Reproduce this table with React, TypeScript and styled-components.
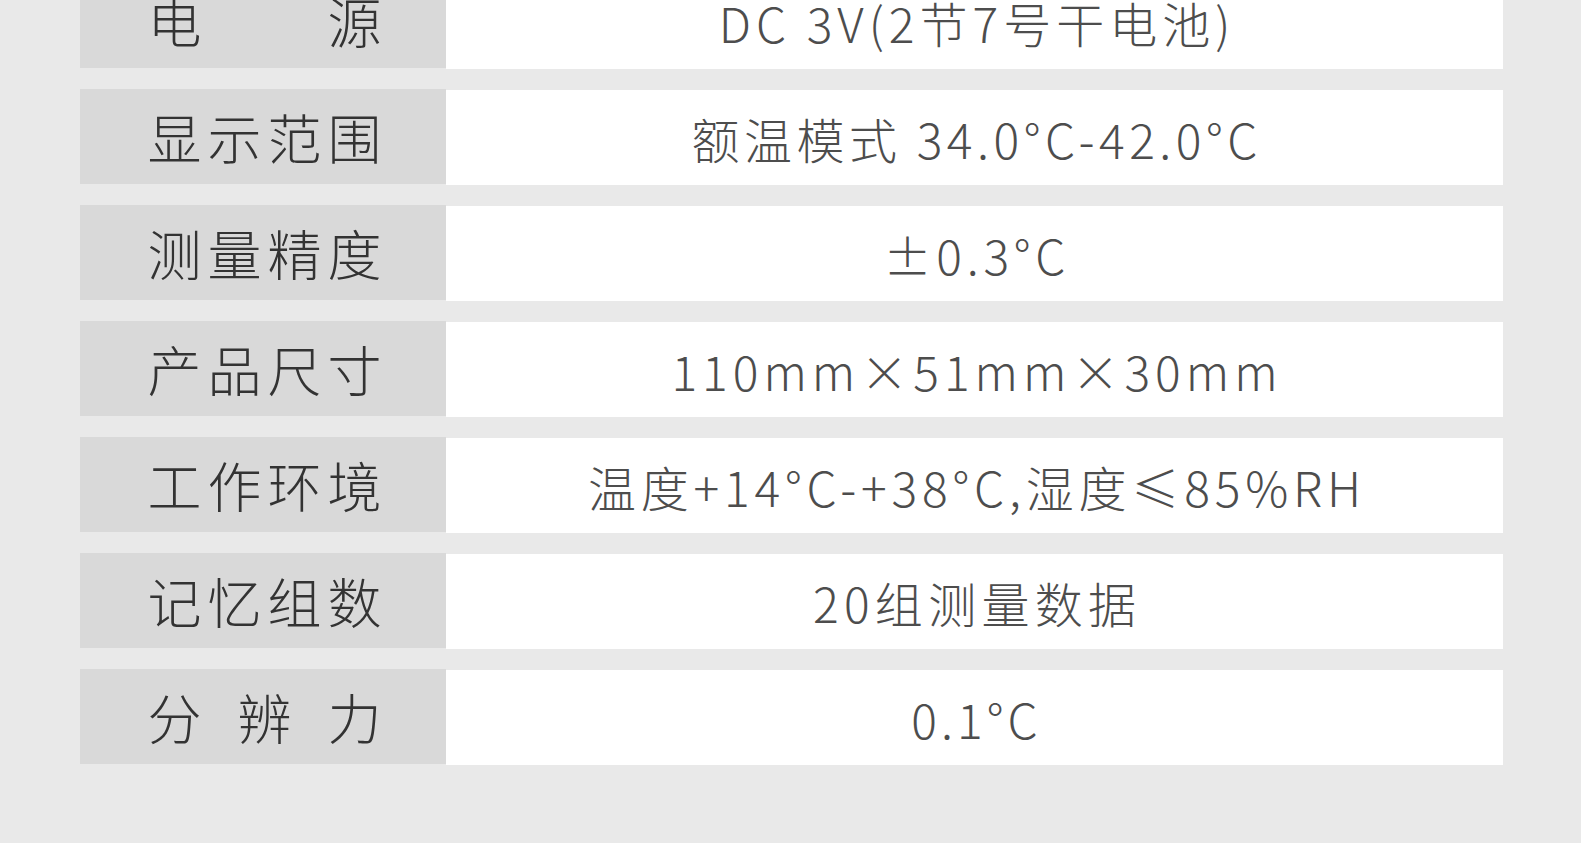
import React from 'react';
import styled, { createGlobalStyle } from 'styled-components';

const GlobalStyle = createGlobalStyle`
  html, body {
    margin: 0;
    padding: 0;
    background: #e9e9e9;
  }
  body {
    font-family: "Noto Sans CJK SC", "Noto Sans", sans-serif;
  }
`;

interface SpecRow {
  label: string;
  value: string;
  spacing?: number;
}

const specs: SpecRow[] = [
  { label: '电源', value: 'DC 3V(2节7号干电池)', spacing: 5 },
  { label: '显示范围', value: '额温模式 34.0°C-42.0°C', spacing: 4.5 },
  { label: '测量精度', value: '±0.3°C', spacing: 4.7 },
  { label: '产品尺寸', value: '110mm×51mm×30mm', spacing: 5 },
  { label: '工作环境', value: '温度+14°C-+38°C,湿度≤85%RH', spacing: 4.8 },
  { label: '记忆组数', value: '20组测量数据', spacing: 5.3 },
  { label: '分辨力', value: '0.1°C', spacing: 4 },
];

const Page = styled.div`
  height: 843px;
  overflow: hidden;
  padding: 0 78px 0 80px;
  box-sizing: border-box;
`;

const Table = styled.div`
  margin-top: -27px;
  display: flex;
  flex-direction: column;
  gap: 20px;
`;

const Row = styled.div`
  display: grid;
  grid-template-columns: 366px 1fr;
  height: 96px;
`;

const LabelCell = styled.div`
  background: #d9d9d9;
  display: flex;
  align-items: center;
  justify-content: center;
  padding-left: 3px;
  margin-bottom: 1px;
`;

const LabelText = styled.span`
  display: block;
  width: 234px;
  font-size: 54px;
  font-weight: 200;
  line-height: 1;
  color: #333333;
  text-align: justify;
  text-align-last: justify;
  white-space: nowrap;
`;

const ValueCell = styled.div`
  background: #ffffff;
  display: flex;
  align-items: center;
  justify-content: center;
  margin-top: 1px;
`;

const ValueText = styled.span<{ $spacing: number }>`
  font-size: 48px;
  font-weight: 200;
  line-height: 1;
  color: #4d4d4d;
  letter-spacing: ${p => p.$spacing}px;
  margin-right: -${p => p.$spacing}px;
  white-space: nowrap;
`;

export default function App() {
  return (
    <>
      <GlobalStyle />
      <Page>
        <Table>
          {specs.map(row => (
            <Row key={row.label}>
              <LabelCell>
                <LabelText>{row.label}</LabelText>
              </LabelCell>
              <ValueCell>
                <ValueText $spacing={row.spacing ?? 4}>{row.value}</ValueText>
              </ValueCell>
            </Row>
          ))}
        </Table>
      </Page>
    </>
  );
}
